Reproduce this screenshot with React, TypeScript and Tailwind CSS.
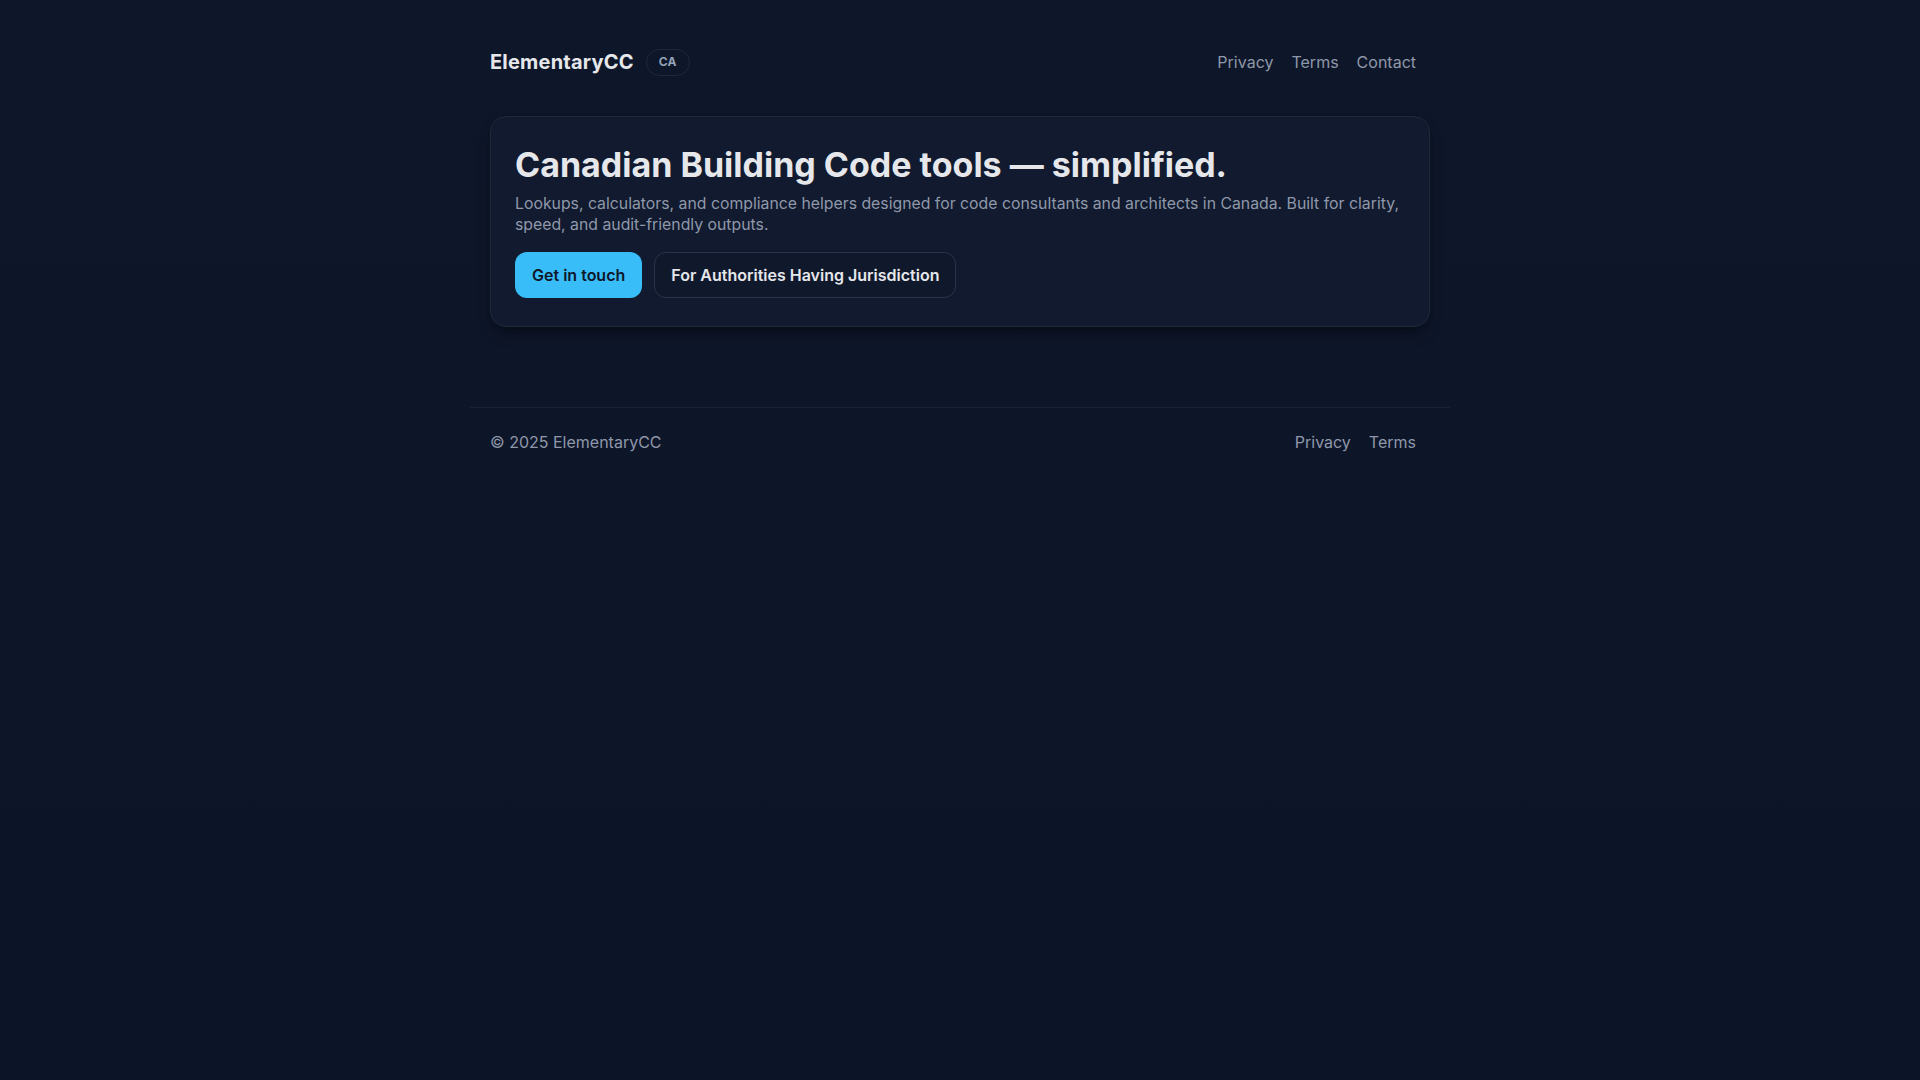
export default function App() {
  return (
    <div className="min-h-screen bg-[#0d1528] bg-gradient-to-b from-[#0e1629] to-[#0c1427] font-['Inter',sans-serif] antialiased">
      <div className="mx-auto max-w-[980px] px-5">
        {/* Header */}
        <header className="flex items-center justify-between pt-12 pb-10">
          <div className="flex items-center gap-3">
            <span className="text-xl font-bold leading-7 tracking-[0.01em] text-[#e5e7eb]">ElementaryCC</span>
            <span className="flex h-[27px] items-center rounded-full border border-[#1e293b] px-3 text-xs font-bold tracking-wide text-[#94a3b8]">
              CA
            </span>
          </div>
          <nav className="mr-[14px] flex items-center gap-[18px] text-base leading-6 text-[#8f98aa]">
            <a href="#">Privacy</a>
            <a href="#">Terms</a>
            <a href="#">Contact</a>
          </nav>
        </header>

        {/* Hero card */}
        <main>
          <section className="rounded-2xl border border-[#1e293b] bg-[#111a2e] px-6 pt-[29px] pb-7 shadow-lg shadow-black/30">
            <h1 className="text-[34px] font-bold leading-[38px] text-[#e5e7eb]">
              Canadian Building Code tools — simplified.
            </h1>
            <p className="mt-[9px] text-[15.8px] leading-[21px] text-[#8f98aa]">
              Lookups, calculators, and compliance helpers designed for code consultants and architects in Canada. Built for clarity, speed, and audit-friendly outputs.
            </p>
            <div className="mt-[17px] flex items-center gap-3">
              <a
                href="#"
                className="rounded-xl border border-transparent bg-[#38bdf8] px-4 py-[10px] text-base font-semibold leading-6 text-[#0f172a]"
              >
                Get in touch
              </a>
              <a
                href="#"
                className="rounded-xl border border-[#273449] bg-[#0f172a]/40 px-4 py-[10px] text-base font-semibold leading-6 text-[#e5e7eb]"
              >
                For Authorities Having Jurisdiction
              </a>
            </div>
          </section>
        </main>
      </div>

      {/* Footer */}
      <footer className="mx-auto mt-20 max-w-[980px] border-t border-[#1a2336]">
        <div className="flex items-center justify-between px-5 pt-[22px] pb-6">
          <span className="text-base leading-6 text-[#8f98aa]">© 2025 ElementaryCC</span>
          <div className="mr-[14px] flex items-center gap-[18px] text-base leading-6 text-[#8f98aa]">
            <a href="#">Privacy</a>
            <a href="#">Terms</a>
          </div>
        </div>
      </footer>
    </div>
  );
}
